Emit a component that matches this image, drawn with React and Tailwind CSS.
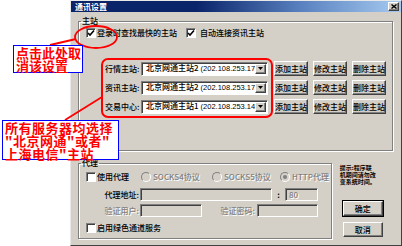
import React from "react";

const raised =
  "border border-t-white border-l-white border-r-[#404040] border-b-[#404040] shadow-[inset_-1px_-1px_0_#808080] bg-[#d4d0c8]";
const sunken =
  "border border-t-[#808080] border-l-[#808080] border-r-white border-b-white shadow-[inset_1px_1px_0_#404040]";
const grayText = "text-[#808080] [text-shadow:1px_1px_0_#fff]";

function CheckBox({ checked }) {
  return (
    <span className={`w-[10px] h-[10px] bg-white shrink-0 flex items-center justify-center ${sunken}`}>
      {checked && (
        <svg width="8" height="8" viewBox="0 0 8 8">
          <path d="M1 4 L3 6 L7 1.5" fill="none" stroke="#000" strokeWidth="1.6" />
        </svg>
      )}
    </span>
  );
}

function Radio({ checked }) {
  return (
    <span className="w-[10px] h-[10px] rounded-full bg-[#d4d0c8] border border-t-[#808080] border-l-[#808080] border-r-white border-b-white shrink-0 flex items-center justify-center">
      {checked && <span className="w-[4px] h-[4px] rounded-full bg-[#808080]" />}
    </span>
  );
}

function Btn({ children, className = "" }) {
  return (
    <div className={`h-[15px] flex items-center justify-center text-[8px] leading-none text-black ${raised} ${className}`}>
      {children}
    </div>
  );
}

function ServerRow({ label, name, ip }) {
  return (
    <div className="flex items-center h-[15px]">
      <span className="w-[36px] text-[8px] leading-none">{label}</span>
      <div className={`w-[127px] h-[14px] bg-white flex items-center pl-[4px] pr-[1px] ${sunken}`}>
        <span className="flex-1 overflow-hidden whitespace-nowrap text-[8px] leading-none">
          {name}
          <span className="ml-[2px] text-[7.5px] font-normal" style={{ fontFamily: '"Liberation Sans", sans-serif' }}>
            {ip}
          </span>
        </span>
        <div className={`w-[11px] h-[10px] flex items-center justify-center shrink-0 ${raised}`}>
          <svg width="5" height="3" viewBox="0 0 5 3">
            <path d="M0 0 H5 L2.5 3 Z" fill="#000" />
          </svg>
        </div>
      </div>
      <Btn className="w-[34px] ml-[6px]">添加主站</Btn>
      <Btn className="w-[34px] ml-[5px]">修改主站</Btn>
      <Btn className="w-[34px] ml-[5px]">删除主站</Btn>
    </div>
  );
}

const groupCls =
  "border border-[#808080] shadow-[inset_1px_1px_0_#fff,1px_1px_0_#fff]";

export default function App() {
  return (
    <div
      className="relative w-[402px] h-[246px] bg-white overflow-hidden"
      style={{ fontFamily: '"Noto Sans CJK SC", "Liberation Sans", sans-serif' }}
    >
      {/* dialog */}
      <div className="ml-[70px] w-[332px] h-[246px] bg-[#d4d0c8] font-medium text-black border border-t-[#e8e8e8] border-l-[#e8e8e8] border-r-[#404040] border-b-[#404040]">
        <div className="h-[11px] flex items-center justify-between pl-[4px] pr-[2px] bg-[linear-gradient(to_right,#0a246a_38%,#5a82c0_70%,#a6caf0)]">
          <span className="text-white font-bold text-[8px] leading-none">通讯设置</span>
          <div className={`w-[11px] h-[9px] flex items-center justify-center ${raised}`}>
            <svg width="6" height="5" viewBox="0 0 6 5">
              <path d="M0.5 0.5 L5.5 4.5 M5.5 0.5 L0.5 4.5" stroke="#000" strokeWidth="1.4" />
            </svg>
          </div>
        </div>

        <div className="pl-[7px] pr-[8px]">
          {/* 主站 */}
          <fieldset className={`mt-[4px] h-[135px] ${groupCls}`}>
            <legend className="ml-[2px] px-[1px] text-[8px] leading-[10px]">主站</legend>
            <div className="mt-[2px] flex items-center h-[10px] pl-[7px] text-[8px] leading-none">
              <CheckBox checked />
              <span className="ml-[1px] w-[89px]">登录时查找最快的主站</span>
              <CheckBox checked />
              <span className="ml-[4px]">自动连接资讯主站</span>
            </div>
            <div className="mt-[23px] pl-[26px] flex flex-col gap-[4px]">
              <ServerRow label="行情主站:" name="北京网通主站2" ip="(202.108.253.17" />
              <ServerRow label="资讯主站:" name="北京网通主站2" ip="(202.108.253.17" />
              <ServerRow label="交易中心:" name="北京网通主站1" ip="(202.108.253.14" />
            </div>
          </fieldset>

          <div className="mt-[7px] flex items-start">
            {/* 代理 */}
            <fieldset className={`w-[257px] h-[81px] ${groupCls}`}>
              <legend className="ml-[2px] px-[1px] text-[8px] leading-[10px]">代理</legend>
              <div className="mt-[4px] flex items-center h-[10px] pl-[7px] text-[8px] leading-none">
                <CheckBox />
                <span className="ml-[1px] w-[44px]">使用代理</span>
                <Radio />
                <span className={`ml-[2px] w-[59px] ${grayText}`}>SOCKS4协议</span>
                <Radio />
                <span className={`ml-[2px] w-[56px] ${grayText}`}>SOCKS5协议</span>
                <Radio checked />
                <span className={`ml-[2px] ${grayText}`}>HTTP代理</span>
              </div>
              <div className="mt-[6px] flex items-center h-[13px] text-[8px] leading-none">
                <span className="w-[61px] text-right pr-[1px]">代理地址:</span>
                <div className={`w-[132px] h-[13px] ${sunken}`} />
                <span className="w-[13px] text-center font-bold">:</span>
                <div className={`w-[33px] h-[13px] flex items-center pl-[3px] ${sunken}`}>
                  <span className={grayText}>80</span>
                </div>
              </div>
              <div className="mt-[3px] flex items-center h-[13px] text-[8px] leading-none">
                <span className={`w-[61px] text-right pr-[1px] ${grayText}`}>验证用户:</span>
                <div className={`w-[62px] h-[13px] ${sunken}`} />
                <span className={`w-[55px] text-right pr-[2px] ${grayText}`}>验证密码:</span>
                <div className={`w-[61px] h-[13px] ${sunken}`} />
              </div>
              <div className="mt-[6px] flex items-center h-[10px] pl-[7px] text-[8px] leading-none">
                <CheckBox />
                <span className="ml-[1px]">启用绿色通道服务</span>
              </div>
            </fieldset>

            <div className="ml-[8px] w-[54px] flex flex-col">
              <div className="mt-[6px] text-[6px] leading-[7px] font-bold">
                <div>提示:程序联</div>
                <div>机期间请勿改</div>
                <div>变系统时间。</div>
              </div>
              <Btn className="mt-[16px] ml-[3px] w-[40px] h-[14px] outline outline-1 outline-black">确定</Btn>
              <Btn className="mt-[6px] ml-[3px] w-[40px] h-[14px]">取消</Btn>
            </div>
          </div>
        </div>
      </div>

      {/* annotations */}
      <svg className="absolute inset-0 pointer-events-none" width="402" height="246">
        <ellipse cx="96" cy="37" rx="21" ry="11" fill="none" stroke="#ff0000" strokeWidth="1.8" />
        <line x1="50" y1="45" x2="76" y2="39" stroke="#ff0000" strokeWidth="1.8" />
        <rect x="102" y="59" width="170" height="58" rx="6" fill="none" stroke="#ff0000" strokeWidth="2" />
        <line x1="65" y1="120" x2="102" y2="97" stroke="#ff0000" strokeWidth="1.8" />
      </svg>
      <div className="absolute left-[13px] top-[45px] w-[70px] h-[28px] bg-white border border-[#0000ff] pl-[2px] text-[#ff0000] font-bold text-[13px] leading-[13px]">
        <div>点击此处取</div>
        <div>消该设置</div>
      </div>
      <div className="absolute left-[2px] top-[120px] w-[117px] h-[40px] bg-white border border-[#0000ff] pl-[2px] text-[#ff0000] font-bold text-[13px] leading-[13px] tracking-[0.5px] whitespace-nowrap">
        <div>所有服务器均选择</div>
        <div>"北京网通"或者"</div>
        <div>上海电信"主站</div>
      </div>
    </div>
  );
}
